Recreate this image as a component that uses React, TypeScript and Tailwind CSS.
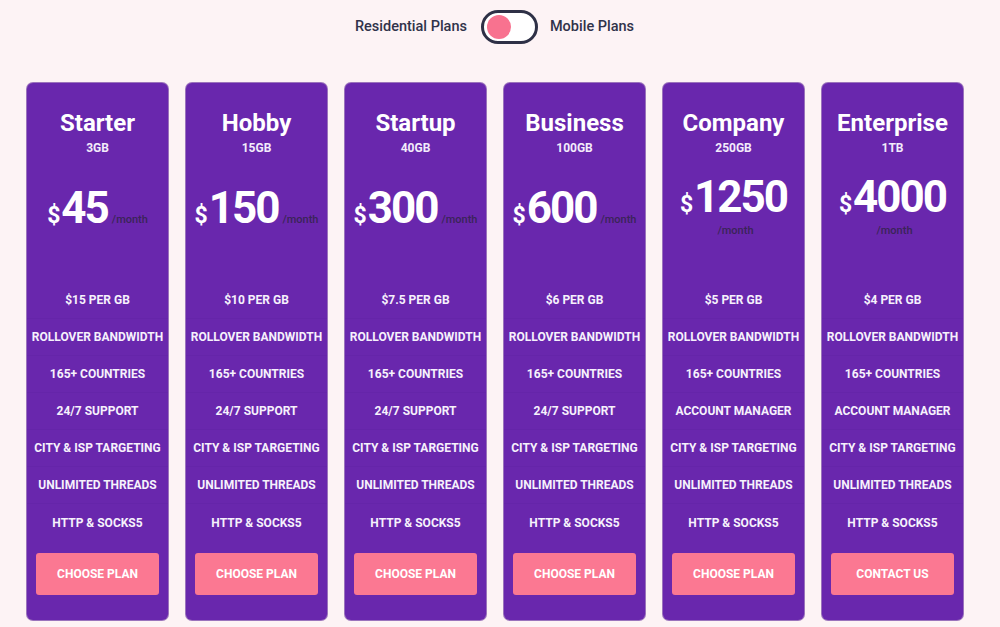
import React from "react";

type Plan = {
  name: string;
  size: string;
  price: string;
  perGb: string;
  support: string;
  cta: string;
};

const plans: Plan[] = [
  { name: "Starter", size: "3GB", price: "45", perGb: "$15 PER GB", support: "24/7 SUPPORT", cta: "CHOOSE PLAN" },
  { name: "Hobby", size: "15GB", price: "150", perGb: "$10 PER GB", support: "24/7 SUPPORT", cta: "CHOOSE PLAN" },
  { name: "Startup", size: "40GB", price: "300", perGb: "$7.5 PER GB", support: "24/7 SUPPORT", cta: "CHOOSE PLAN" },
  { name: "Business", size: "100GB", price: "600", perGb: "$6 PER GB", support: "24/7 SUPPORT", cta: "CHOOSE PLAN" },
  { name: "Company", size: "250GB", price: "1250", perGb: "$5 PER GB", support: "ACCOUNT MANAGER", cta: "CHOOSE PLAN" },
  { name: "Enterprise", size: "1TB", price: "4000", perGb: "$4 PER GB", support: "ACCOUNT MANAGER", cta: "CONTACT US" },
];

function Card({ plan }: { plan: Plan }) {
  const features = [
    plan.perGb,
    "ROLLOVER BANDWIDTH",
    "165+ COUNTRIES",
    plan.support,
    "CITY & ISP TARGETING",
    "UNLIMITED THREADS",
    "HTTP & SOCKS5",
  ];
  return (
    <div className="w-[141px] h-[537px] rounded-[6px] bg-[#6927ad] flex flex-col items-center shadow-[0_0_0_1px_rgba(90,30,150,0.6)]">
      <div className="mt-[26px] text-[24px] leading-[28px] font-bold text-white">{plan.name}</div>
      <div className="mt-[4px] text-[12px] leading-[15px] font-bold text-[#f3ecfb]">{plan.size}</div>
      <div className="h-[126px] pb-[23px] w-full flex flex-col justify-center">
        <div className="flex flex-wrap justify-center items-baseline px-[4px]">
          <span className="text-[23px] leading-[23px] font-bold text-white mr-[1px]">$</span>
          <span className="text-[44px] leading-[46px] font-bold text-white tracking-[-2px]">{plan.price}</span>
          <span className="text-[11px] leading-[22px] font-medium text-[#3a2457] ml-[4px]">/month</span>
        </div>
      </div>
      <div className="w-full">
        {features.map((f, i) => (
          <div
            key={i}
            className={`h-[37px] flex items-center justify-center text-[12px] font-bold text-[#f6f1fc] whitespace-nowrap ${
              i < features.length - 1 ? "border-b border-[#6525a9]" : ""
            }`}
          >
            {f}
          </div>
        ))}
      </div>
      <button className="mt-[12px] w-[123px] h-[42px] rounded-[3px] bg-[#fb7892] text-white text-[12px] font-bold">
        {plan.cta}
      </button>
    </div>
  );
}

export default function App() {
  return (
    <div
      className="w-[1000px] h-[627px] bg-[#fdf3f5] overflow-hidden"
      style={{ fontFamily: "Roboto, 'Liberation Sans', sans-serif" }}
    >
      <div className="w-[989px] flex flex-col items-center">
        <div className="mt-[10px] flex items-center h-[34px]">
          <span className="text-[14.5px] font-medium text-[#30324a]">Residential Plans</span>
          <div className="ml-[14px] mr-[12px] w-[57px] h-[34px] rounded-full border-[3px] border-[#2e3046] bg-white flex items-center pl-[3px]">
            <div className="w-[24px] h-[24px] rounded-full bg-[#f8728f]" />
          </div>
          <span className="text-[14.5px] font-medium text-[#30324a]">Mobile Plans</span>
        </div>
      </div>
      <div className="mt-[39px] ml-[27px] flex gap-[18px]">
        {plans.map((p) => (
          <Card key={p.name} plan={p} />
        ))}
      </div>
    </div>
  );
}
